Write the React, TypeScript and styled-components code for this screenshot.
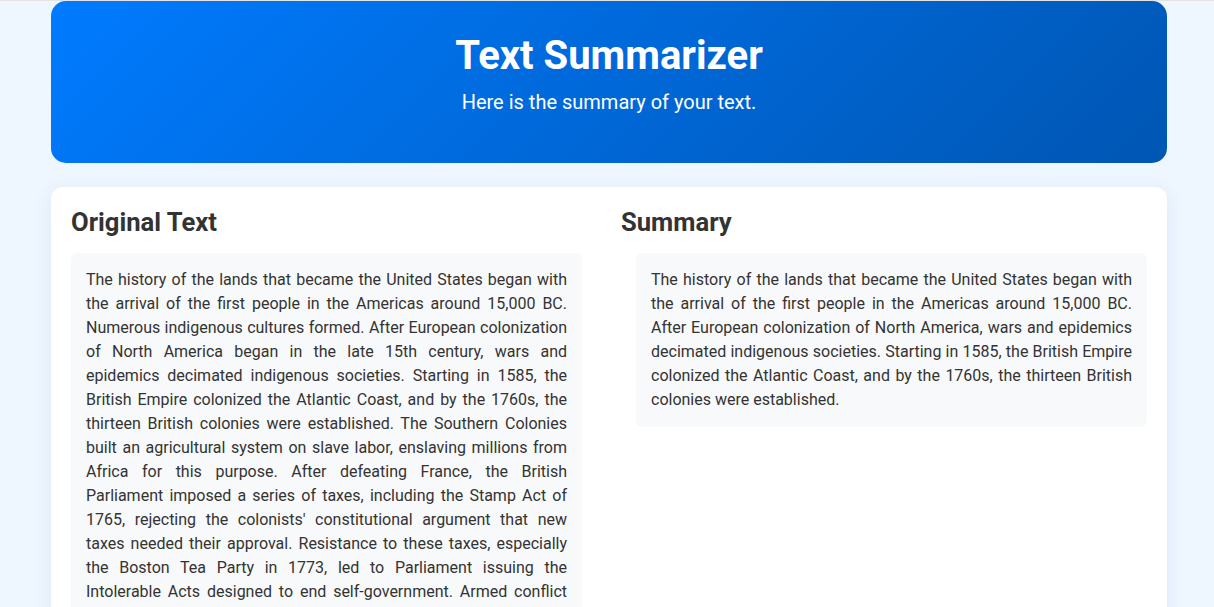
import React from "react";
import styled, { createGlobalStyle } from "styled-components";

const GlobalStyle = createGlobalStyle`
  html, body {
    margin: 0;
    padding: 0;
  }
  body {
    background: #eef6ff;
    border-top: 1px solid #e3e3e3;
    font-family: Roboto, "Liberation Sans", Arial, sans-serif;
    color: #333;
  }
`;

const Page = styled.div`
  padding: 0 47px 0 51px;
`;

const Header = styled.header`
  background: linear-gradient(135deg, #007bff 0%, #0056b3 100%);
  border-radius: 15px;
  color: #fff;
  text-align: center;
  padding: 31px 20px 32px;
`;

const Title = styled.h1`
  margin: 0 0 8px;
  font-size: 40px;
  line-height: 48px;
  font-weight: 700;
`;

const Subtitle = styled.p`
  margin: 0 0 15px;
  font-size: 20px;
  line-height: 28px;
  font-weight: 400;
`;

const Card = styled.main`
  margin-top: 24px;
  background: #fff;
  border-radius: 12px;
  box-shadow: 0 4px 20px rgba(0, 60, 140, 0.08);
  padding: 18px 20px 20px;
  display: grid;
  grid-template-columns: 511px 1fr;
  column-gap: 39px;
  align-items: start;
`;

const Column = styled.section`
  display: flex;
  flex-direction: column;
`;

const SectionTitle = styled.h2`
  margin: 0 0 14px;
  font-size: 25.6px;
  line-height: 34px;
  font-weight: 700;
  color: #333;
`;

const TextBox = styled.div<{ $inset?: boolean }>`
  background: #f8f9fa;
  border-radius: 6px;
  padding: 15px;
  margin-left: ${(p) => (p.$inset ? "15px" : "0")};
  font-size: 16px;
  line-height: 24px;
  text-align: justify;
  color: #333;
`;

const original =
  "The history of the lands that became the United States began with the arrival of the first people in the Americas around 15,000 BC. Numerous indigenous cultures formed. After European colonization of North America began in the late 15th century, wars and epidemics decimated indigenous societies. Starting in 1585, the British Empire colonized the Atlantic Coast, and by the 1760s, the thirteen British colonies were established. The Southern Colonies built an agricultural system on slave labor, enslaving millions from Africa for this purpose. After defeating France, the British Parliament imposed a series of taxes, including the Stamp Act of 1765, rejecting the colonists' constitutional argument that new taxes needed their approval. Resistance to these taxes, especially the Boston Tea Party in 1773, led to Parliament issuing the Intolerable Acts designed to end self-government. Armed conflict began in Massachusetts in 1775. In 1776, in Philadelphia, the Second Continental Congress declared the independence of the colonies as the United States. Led by General George Washington, it won the Revolutionary War.";

const summary =
  "The history of the lands that became the United States began with the arrival of the first people in the Americas around 15,000 BC. After European colonization of North America, wars and epidemics decimated indigenous societies. Starting in 1585, the British Empire colonized the Atlantic Coast, and by the 1760s, the thirteen British colonies were established.";

export default function App() {
  return (
    <>
      <GlobalStyle />
      <Page>
        <Header>
          <Title>Text Summarizer</Title>
          <Subtitle>Here is the summary of your text.</Subtitle>
        </Header>
        <Card>
          <Column>
            <SectionTitle>Original Text</SectionTitle>
            <TextBox>{original}</TextBox>
          </Column>
          <Column>
            <SectionTitle>Summary</SectionTitle>
            <TextBox $inset>{summary}</TextBox>
          </Column>
        </Card>
      </Page>
    </>
  );
}
